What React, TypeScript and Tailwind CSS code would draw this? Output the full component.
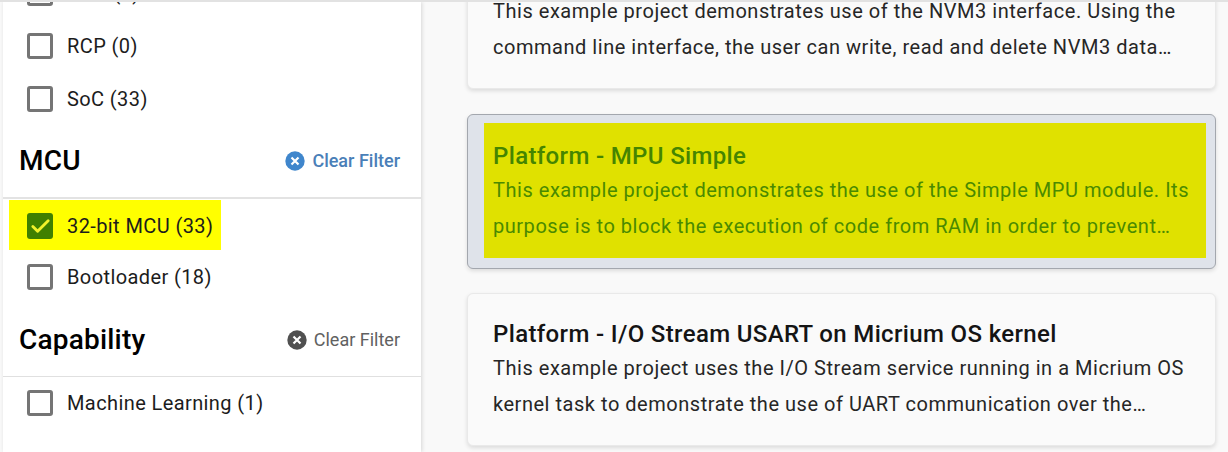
import { Check } from "lucide-react";

function FilterRow({ label, checked }: { label: string; checked?: boolean }) {
  return (
    <div className="flex items-center gap-[14px]">
      <span
        className={
          checked
            ? "flex h-[26px] w-[26px] items-center justify-center rounded-[3px] bg-[#3f8000]"
            : "h-[26px] w-[26px] rounded-[3px] border-[3px] border-[#757575] bg-white"
        }
      >
        {checked && <Check size={23} strokeWidth={3} className="text-[#f2f22a]" />}
      </span>
      <span className="text-[20px] tracking-[0.4px] text-[#1c1c1c]">{label}</span>
    </div>
  );
}

function ClearIcon({ color }: { color: string }) {
  return (
    <svg width="20" height="20" viewBox="0 0 20 20" fill="none">
      <circle cx="10" cy="10" r="9.7" fill={color} />
      <path d="M6.5 6.5L13.5 13.5M13.5 6.5L6.5 13.5" stroke="white" strokeWidth="2.2" />
    </svg>
  );
}

function FilterHeading({ title, active, className }: { title: string; active?: boolean; className: string }) {
  return (
    <div className={"box-content flex items-center justify-between pl-4 pr-[21px] " + className}>
      <h2 className="text-[28px] font-medium tracking-[0.2px] text-black">{title}</h2>
      <button className={"flex items-center gap-[7px] text-[18px] " + (active ? "font-medium text-[#4a7fb8]" : "text-[#616161]")}>
        <ClearIcon color={active ? "#3f86cc" : "#505050"} />
        Clear Filter
      </button>
    </div>
  );
}

function ProjectCard({
  title,
  lines,
  selected,
  className,
  innerClassName,
}: {
  title?: string;
  lines: string[];
  selected?: boolean;
  className: string;
  innerClassName: string;
}) {
  return (
    <div
      className={
        "w-[749px] rounded-[6px] border pb-[10px] pl-4 pr-[9px] pt-2 shadow-[0_2px_4px_rgba(0,0,0,0.12)] " +
        (selected ? "border-[#a3a7ae] bg-[#dfe3ea] " : "border-[#e9e9e9] bg-[#fafafa] ") +
        className
      }
    >
      <div className={"px-[9px] " + innerClassName + (selected ? " bg-[#e0e100] text-[#4a8a00]" : " text-[#262626]")}>
        <h3 className={"h-7 text-[24px] font-medium leading-6 tracking-[0.35px] " + (selected ? "text-[#458500]" : "text-[#141414]")}>{title}</h3>
        {lines.map((line) => (
          <p key={line} className="whitespace-nowrap text-[20px] leading-[36px] tracking-[0.53px]">
            {line}
          </p>
        ))}
      </div>
    </div>
  );
}

export default function App() {
  return (
    <div className="h-[452px] w-[1228px] overflow-hidden bg-[#f9f9f9] font-['Roboto',sans-serif]">
      <div className="relative z-10 h-0.5 bg-[#e2e2e2]" />
      <div className="flex">
        <aside className="ml-[3px] h-[450px] w-[418px] overflow-hidden bg-white shadow-[1px_0_4px_rgba(0,0,0,0.14)]">
          <div className="-mt-[35px] flex flex-col gap-px pb-px pl-6">
            <div className="flex h-[52px] items-center"><FilterRow label="NCP (0)" /></div>
            <div className="flex h-[52px] items-center"><FilterRow label="RCP (0)" /></div>
            <div className="flex h-[52px] items-center"><FilterRow label="SoC (33)" /></div>
          </div>
          <FilterHeading title="MCU" active className="h-[69px] border-b-2 border-[#e3e3e3] pb-0.5" />
          <div className="ml-[6px] mt-px flex h-[50px] w-[212px] items-center bg-[#ffff00] pl-[18px] pt-0.5">
            <FilterRow label="32-bit MCU (33)" checked />
          </div>
          <div className="mt-px flex h-[52px] items-center pl-6"><FilterRow label="Bootloader (18)" /></div>
          <FilterHeading title="Capability" className="h-[73px] border-b border-[#e0e0e0]" />
          <div className="flex h-[52px] items-center pl-6"><FilterRow label="Machine Learning (1)" /></div>
        </aside>
        <main className="-mt-[67px] ml-[46px] flex flex-col">
          <ProjectCard
            className="mb-[25px]"
            innerClassName="h-[134px] pt-[21px]"
            title="Platform - NVM3"
            lines={[
              "This example project demonstrates use of the NVM3 interface. Using the",
              "command line interface, the user can write, read and delete NVM3 data…",
            ]}
          />
          <ProjectCard
            className="mb-[24px]"
            innerClassName="h-[135px] pt-[21px]"
            selected
            title="Platform - MPU Simple"
            lines={[
              "This example project demonstrates the use of the Simple MPU module. Its",
              "purpose is to block the execution of code from RAM in order to prevent…",
            ]}
          />
          <ProjectCard
            className=""
            innerClassName="h-[133px] pt-[20px]"
            title="Platform - I/O Stream USART on Micrium OS kernel"
            lines={[
              "This example project uses the I/O Stream service running in a Micrium OS",
              "kernel task to demonstrate the use of UART communication over the…",
            ]}
          />
        </main>
      </div>
    </div>
  );
}
